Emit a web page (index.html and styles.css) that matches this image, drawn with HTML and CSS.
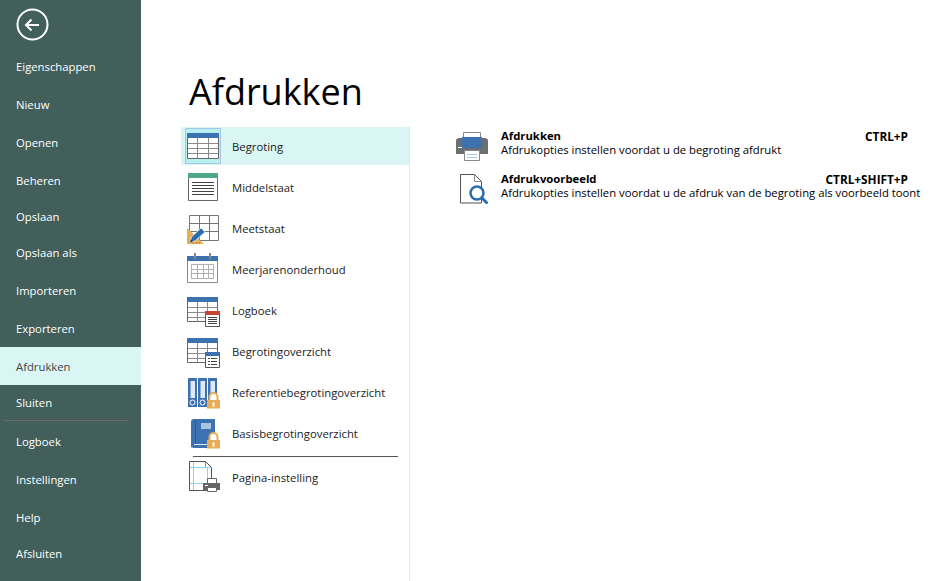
FILE: index.html
```html
<!DOCTYPE html>
<html lang="nl">

<head>
  <meta charset="UTF-8">
  <title>Afdrukken</title>
  <link rel="stylesheet" href="styles.css">
</head>

<body>
  <div class="sidebar">
    <div class="back">
      <svg width="34" height="34" viewBox="0 0 34 34">
        <circle cx="16.5" cy="16.5" r="15" fill="none" stroke="#fff" stroke-width="2"/>
        <path d="M10 17h13M15.500 11.500L10 17l5.500 5.500" fill="none" stroke="#fff" stroke-width="2"/>
      </svg>
    </div>
    <div class="nav-item low">Eigenschappen</div>
    <div class="nav-item low">Nieuw</div>
    <div class="nav-item low">Openen</div>
    <div class="nav-item low">Beheren</div>
    <div class="nav-item short">Opslaan</div>
    <div class="nav-item short">Opslaan als</div>
    <div class="nav-item low">Importeren</div>
    <div class="nav-item low">Exporteren</div>
    <div class="nav-item low active">Afdrukken</div>
    <div class="nav-item close">Sluiten</div>
    <div class="nav-line"></div>
    <div class="nav-item">Logboek</div>
    <div class="nav-item">Instellingen</div>
    <div class="nav-item">Help</div>
    <div class="nav-item last">Afsluiten</div>
  </div>

  <div class="main">
    <h1>Afdrukken</h1>
    <div class="columns">
      <div class="report-list">
        <div class="report selected">
          <span class="report-icon icon-selected">
            <svg width="36" height="36" viewBox="0 0 36 36">
              <path d="M2.500 5.500h31v25h-31z" fill="#fff" stroke="#666"/>
              <path d="M2 5h32v5H2z" fill="#3c72b0"/>
              <path d="M3 15.500h30M3 20.500h30M3 25.500h30M12.500 10v20M23.500 10v20" stroke="#8a8a8a" fill="none"/>
            </svg>
          </span>
          Begroting
        </div>
        <div class="report">
          <span class="report-icon">
            <svg width="36" height="36" viewBox="0 0 36 36">
              <path d="M3.500 4.500h29v27h-29z" fill="#fff" stroke="#666"/>
              <path d="M3 4h30v5H3z" fill="#4fa888"/>
              <path d="M7 13.500h22M7 16.500h22M7 19.500h22M7 22.500h22M7 25.500h22" stroke="#444" fill="none"/>
            </svg>
          </span>
          Middelstaat
        </div>
        <div class="report">
          <span class="report-icon">
            <svg width="36" height="36" viewBox="0 0 36 36">
              <path d="M4.500 5.500h29v25h-29zM4.500 13.500h29M4.500 21.500h29M14.500 5.500v25M24.500 5.500v25" fill="#fff" stroke="#777"/>
              <path d="M2 18l17 16H2z" fill="#e8ad55"/>
              <path d="M5 32l1.500-5 9.500-9 4 4-10 9z" fill="#2a6cb0" stroke="#fff" stroke-width=".7"/>
              <path d="M5 32.500l3-1-2-2z" fill="#333"/>
              <path d="M8 33h1M11 33h1M14 33h1" stroke="#8a6a30" fill="none"/>
            </svg>
          </span>
          Meetstaat
        </div>
        <div class="report">
          <span class="report-icon">
            <svg width="36" height="36" viewBox="0 0 36 36">
              <path d="M2.500 5.500h30v26h-30z" fill="#fff" stroke="#8a8a8a"/>
              <path d="M2 5h31v5H2z" fill="#3c72b0"/>
              <path d="M9 2h2v6H9zM24 2h2v6h-2z" fill="#8a8a8a"/>
              <path d="M6.500 13.500h22v14h-22zM6.500 18.500h22M6.500 22.500h22M12.500 13.500v14M18.500 13.500v14M23.500 13.500v14" fill="none" stroke="#b0b0b0"/>
            </svg>
          </span>
          Meerjarenonderhoud
        </div>
        <div class="report">
          <span class="report-icon">
            <svg width="36" height="36" viewBox="0 0 36 36">
              <path d="M2.500 5.500h30v24h-30z" fill="#fff" stroke="#666"/>
              <path d="M2 5h31v5H2z" fill="#3c72b0"/>
              <path d="M3 15.500h29M3 20.500h29M3 25.500h29M12.500 10v20M22.500 10v20" stroke="#8a8a8a" fill="none"/>
              <path d="M20.500 19.500h14v15h-14z" fill="#fff" stroke="#555"/>
              <path d="M20 19h15v4H20z" fill="#c8452f"/>
              <path d="M23 25.500h9M23 27.500h9M23 29.500h9M23 31.500h9" stroke="#444" fill="none"/>
            </svg>
          </span>
          Logboek
        </div>
        <div class="report">
          <span class="report-icon">
            <svg width="36" height="36" viewBox="0 0 36 36">
              <path d="M2.500 5.500h30v24h-30z" fill="#fff" stroke="#666"/>
              <path d="M2 5h31v5H2z" fill="#3c72b0"/>
              <path d="M3 15.500h29M3 20.500h29M3 25.500h29M12.500 10v20M22.500 10v20" stroke="#8a8a8a" fill="none"/>
              <path d="M20.500 19.500h14v15h-14z" fill="#fff" stroke="#555"/>
              <path d="M20 19h15v4H20z" fill="#3c72b0"/>
              <path d="M23 25.500h2M26 25.500h6M23 28.500h2M26 28.500h6M23 31.500h2M26 31.500h6" stroke="#444" fill="none"/>
            </svg>
          </span>
          Begrotingoverzicht
        </div>
        <div class="report">
          <span class="report-icon">
            <svg width="36" height="36" viewBox="0 0 36 36">
              <path d="M3 4h9v29H3zM13 4h9v29h-9zM23 4h9v22h-9z" fill="#3c72b0"/>
              <path d="M5.500 7h4.500v17H5.500zM15.500 7h4.500v17h-4.500zM25.500 7h4.500v14h-4.500z" fill="#dfe9f5"/>
              <circle cx="7.500" cy="28.500" r="2.500" fill="none" stroke="#fff"/>
              <circle cx="17.500" cy="28.500" r="2.500" fill="none" stroke="#fff"/>
              <path d="M24.500 26v-3a4 4 0 0 1 8 0v3" fill="#fff" stroke="#e8ad55" stroke-width="2"/>
              <path d="M22 26h13v8.500H22z" fill="#e8ad55"/>
              <path d="M27.500 28.500h2v4h-2z" fill="#fff"/>
            </svg>
          </span>
          Referentiebegrotingoverzicht
        </div>
        <div class="report">
          <span class="report-icon">
            <svg width="36" height="36" viewBox="0 0 36 36">
              <path d="M6 7a3 3 0 0 1 3-3h21v27H9a3 3 0 0 0-3 2z" fill="#3c72b0"/>
              <path d="M6 31h18v2H8z" fill="#3c72b0"/>
              <path d="M9 29h16v1H9z" fill="#dfe9f5"/>
              <path d="M10 4h1v25h-1z" fill="#2f5f98"/>
              <path d="M16 8h10v6H16z" fill="#a9c4e4"/>
              <path d="M24.500 25v-3a4 4 0 0 1 8 0v3" fill="#fff" stroke="#e8ad55" stroke-width="2"/>
              <path d="M22 25h13v8.500H22z" fill="#e8ad55"/>
              <path d="M27.500 27.500h2v4h-2z" fill="#fff"/>
            </svg>
          </span>
          Basisbegrotingoverzicht
        </div>
        <div class="report-line"></div>
        <div class="report">
          <span class="report-icon">
            <svg width="36" height="36" viewBox="0 -1 36 36">
              <path d="M4.500 1.500h16l6 6v23h-22z" fill="#fff" stroke="#555"/>
              <path d="M20.500 1.500v6h6" fill="none" stroke="#888"/>
              <path d="M8.500 2v28M22.500 8v22M5 7.500h21M5 23.500h21" stroke="#8fd0f5" fill="none"/>
              <path d="M22.500 18.500h9v6h-9z" fill="#fff" stroke="#666"/>
              <path d="M18 23h17v7H18z" fill="#666"/>
              <path d="M20 25h3v1h-3z" fill="#fff"/>
              <path d="M22.500 27.500h9v4h-9z" fill="#fff" stroke="#666"/>
            </svg>
          </span>
          Pagina-instelling
        </div>
      </div>

      <div class="actions">
        <div class="action">
          <svg class="action-icon" width="32" height="30" viewBox="0 0 32 30">
            <path d="M7.500.5h17v9h-17z" fill="#fff" stroke="#888"/>
            <path d="M0 9a3 3 0 0 1 3-3h26a3 3 0 0 1 3 3v13H0z" fill="#6b6f72"/>
            <path d="M6 5h20v11H6z" fill="#3c72b0"/>
            <path d="M2 15h4v1H2z" fill="#fff"/>
            <path d="M8.500 18.500h15v10h-15z" fill="#fff" stroke="#888"/>
            <path d="M11 22.500h10M11 25.500h10" stroke="#a9c4e4" fill="none"/>
          </svg>
          <div class="action-text">
            <div class="action-head"><b>Afdrukken</b><b class="keys">CTRL+P</b></div>
            <div>Afdrukopties instellen voordat u de begroting afdrukt</div>
          </div>
        </div>
        <div class="action">
          <svg class="action-icon preview-icon" width="32" height="30" viewBox="0 0 32 30">
            <path d="M4.500.5h14l7 7v21.500h-21z" fill="#fff" stroke="#555"/>
            <path d="M18.500.5v7h7" fill="none" stroke="#888"/>
            <circle cx="21" cy="19" r="6.500" fill="#fff" stroke="#2a6cb0" stroke-width="2.500"/>
            <path d="M25.500 23.500l6 6" stroke="#2a6cb0" stroke-width="3"/>
          </svg>
          <div class="action-text">
            <div class="action-head"><b>Afdrukvoorbeeld</b><b class="keys">CTRL+SHIFT+P</b></div>
            <div>Afdrukopties instellen voordat u de afdruk van de begroting als voorbeeld toont</div>
          </div>
        </div>
      </div>
    </div>
  </div>
</body>

</html>
```

FILE: styles.css
```css
html,
body {
  height: 100%;
}

body {
  margin: 0;
  display: flex;
  background-color: #fff;
  color: #000;
  font-family: "Open Sans", "Noto Sans", sans-serif;
  font-size: 11.3px;
  overflow: hidden;
}

/* Left menu */
.sidebar {
  width: 141px;
  flex-shrink: 0;
  background-color: #425f5c;
  color: #fff;
  padding-top: 8px;
  box-sizing: border-box;
}

.back {
  height: 39px;
  padding-left: 16px;
}

.back svg {
  display: block;
}

.nav-item {
  height: 38px;
  line-height: 38px;
  padding-left: 16px;
}

.nav-item.low {
  line-height: 40px;
}

.nav-item.short {
  height: 36px;
  line-height: 36px;
}

.nav-item.close {
  height: 35px;
  line-height: 35px;
}

.nav-item.last {
  height: 36px;
  line-height: 34px;
}

.nav-item.active {
  background-color: #d9f6f5;
  color: #444;
}

.nav-line {
  height: 1px;
  margin: 0 12px 2px 5px;
  background-color: #6b6a66;
}

/* Content */
.main {
  flex: 1;
  display: flex;
  flex-direction: column;
  padding-left: 40px;
}

h1 {
  margin: 0;
  padding: 67px 0 0 8px;
  height: 60px;
  font-size: 36px;
  font-weight: 400;
  line-height: 50px;
}

.columns {
  flex: 1;
  display: flex;
}

.report-list {
  width: 228px;
  border-right: 1px solid #e6e6e6;
  display: flex;
  flex-direction: column;
  gap: 3px;
}

.report {
  height: 38px;
  display: flex;
  align-items: center;
  color: #222;
  padding-left: 4px;
  flex-shrink: 0;
}

.report.selected {
  background-color: #d9f6f5;
}

.report-icon {
  width: 36px;
  height: 36px;
  margin-right: 11px;
  box-sizing: border-box;
}

.report-icon svg {
  display: block;
}

.icon-selected {
  background-color: #b8f0ee;
  outline: 1px solid #a4c6ea;
  outline-offset: -1px;
}

.report-line {
  height: 1px;
  margin: 1px 11px -2px 12px;
  background-color: #555;
}

.actions {
  flex: 1;
  min-width: 0;
  padding: 5px 13px 0 46px;
}

.action {
  display: flex;
  margin-bottom: 13px;
}

.action-icon {
  flex-shrink: 0;
  margin-right: 13px;
}

.preview-icon {
  margin-top: -1px;
}

.action-text {
  flex: 1;
  min-width: 0;
  line-height: 14px;
  margin-top: -3px;
  white-space: nowrap;
}

.action-head {
  display: flex;
  justify-content: space-between;
  padding-right: 13px;
}

.keys {
  font-size: 11.8px;
}
```
